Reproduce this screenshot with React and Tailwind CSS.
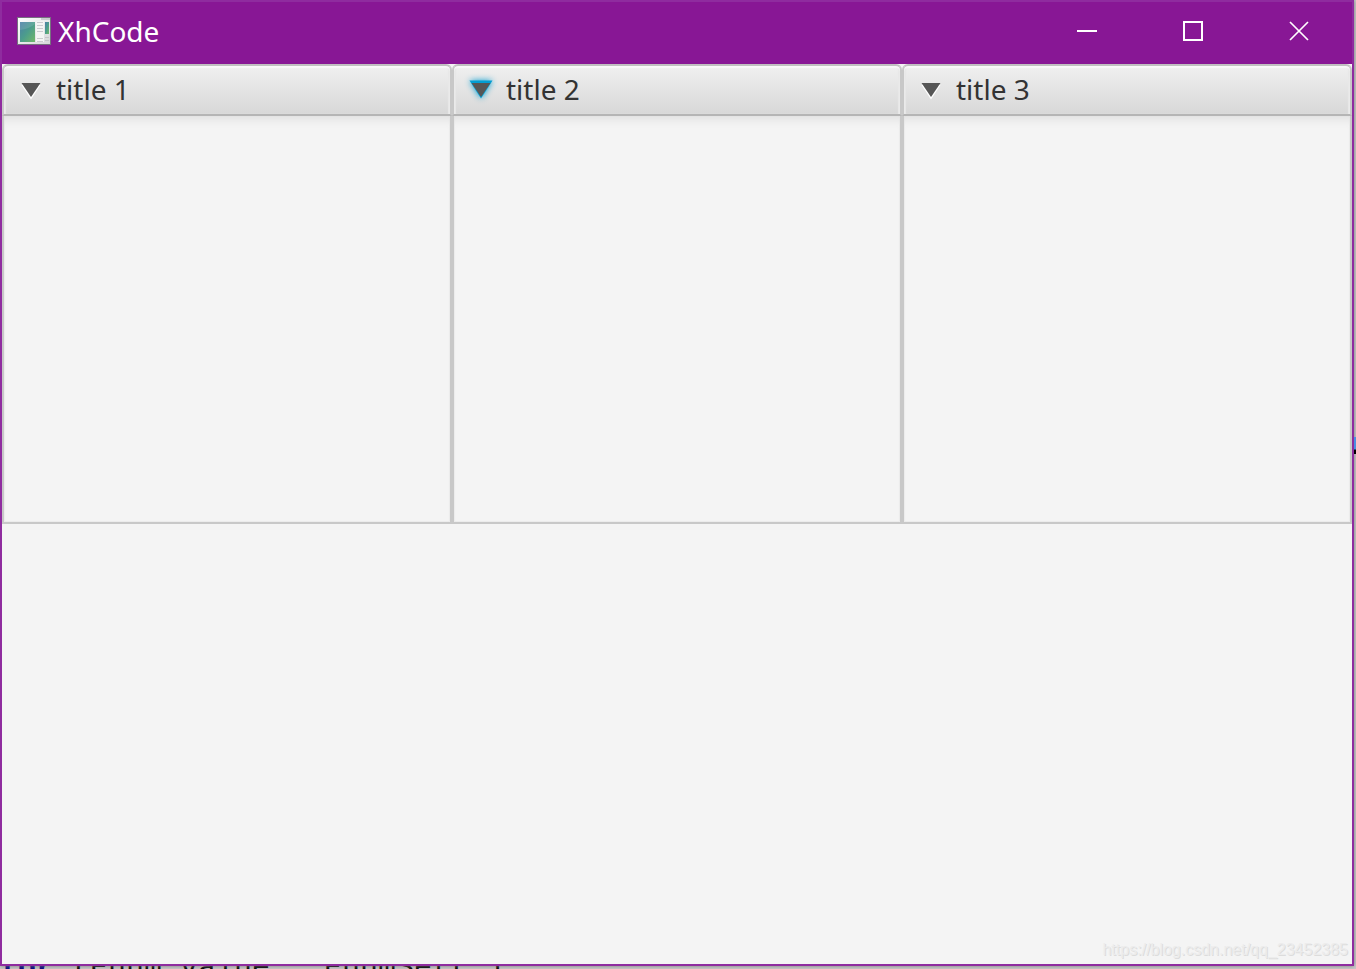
import React, { useState } from "react";

const TitledPane = ({ title, focused }) => {
  const [open, setOpen] = useState(true);

  return (
    <section className="min-w-0 flex flex-col">
      {/* HEADER */}
      <button
        type="button"
        aria-expanded={open}
        onClick={() => setOpen(!open)}
        className="h-[52px] w-full flex items-center gap-3 pl-3.5 pb-0.5 text-left outline-none rounded-t-md border-2 border-b-[#b5b5b5] border-x-[#c8c8c8] border-t-[#c0c0c0] bg-linear-to-b from-[#f0f0f0] to-[#d8d8d8] shadow-[inset_0_2px_1px_#f8f8f8,inset_2px_0_1px_#e8e8e8,inset_-2px_0_1px_#e8e8e8]"
      >
        <svg width="26" height="26" viewBox="0 0 26 26" className="overflow-visible shrink-0">
          {focused ? (
            <path
              d="M1.5 4.5H24.5L13 22.5Z"
              fill="#039ed3"
              className="drop-shadow-[0_0_3px_#039ed3]"
            />
          ) : (
            <path d="M3.5 9H22.5L13 23.5Z" fill="#ffffff" />
          )}
          <path d="M3.5 7H22.5L13 21Z" fill="#565656" />
        </svg>
        <span className="text-[28px] leading-9 text-[#333333]">{title}</span>
      </button>

      {/* CONTENT */}
      {open && (
        <div className="h-[408px] border-2 border-t-0 border-[#c8c8c8] bg-[#f4f4f4] shadow-[inset_0_10px_8px_-6px_#e2e2e2,inset_0_0_0_1px_#ececec]" />
      )}
    </section>
  );
};

const AppIcon = () => (
  <svg width="36" height="30" viewBox="0 0 36 30" className="shrink-0">
    <defs>
      <linearGradient id="screen" x1="0" y1="0" x2="1" y2="1">
        <stop offset="0" stopColor="#4c7fa8" />
        <stop offset="0.5" stopColor="#4c9d8c" />
        <stop offset="1" stopColor="#72b868" />
      </linearGradient>
      <linearGradient id="paper" x1="0" y1="0" x2="1" y2="1">
        <stop offset="0" stopColor="#ffffff" />
        <stop offset="1" stopColor="#d5d5d8" />
      </linearGradient>
    </defs>
    <rect x="1.5" y="1.5" width="33" height="27" fill="url(#paper)" stroke="#777080" />
    <path d="M25 3H34" stroke="#a8a8b2" />
    <rect x="4" y="6" width="15" height="20" fill="url(#screen)" />
    <path d="M4 14Q13 13 19 8V6H4Z" fill="#ffffff" opacity="0.12" />
    <rect x="20" y="5" width="8" height="21" fill="#f4f4f4" />
    <path
      d="M21 6.5H27M21 9.500H27M21 12.500H27M21 15.500H27M21 22.500H27M21 25.500H27"
      stroke="#cacace"
    />
    <rect x="29" y="6" width="4" height="12" fill="url(#screen)" />
    <path d="M29 21.500H33M29 24.500H33" stroke="#c4c4c8" />
  </svg>
);

const controls = [
  { label: "Minimize", path: "M2 12H22" },
  { label: "Maximize", path: "M3 3H21V21H3Z" },
  { label: "Close", path: "M3 3L21 21M21 3L3 21" },
];

const App = () => {
  return (
    <div className="h-screen flex flex-col overflow-hidden bg-[#c9c9c9] font-['Noto_Sans','Open_Sans',sans-serif]">
      <div className="flex-1 min-h-0 flex pr-[2px] relative">
        {/* WINDOW */}
        <div className="flex-1 min-w-0 flex flex-col border-2 border-[#8f2c9f] bg-[#f4f4f4] shadow-[0_0_4px_#777777]">
          {/* TITLE BAR */}
          <header className="h-[62px] shrink-0 flex items-center pb-1 bg-[#881795] text-white">
            <div className="flex-1 flex items-center gap-1.5 pl-3.5">
              <AppIcon />
              <h1 className="text-[28px] leading-9">XhCode</h1>
            </div>

            {controls.map((c) => (
              <button
                key={c.label}
                type="button"
                aria-label={c.label}
                className="w-[106px] h-full flex items-center justify-center"
              >
                <svg
                  width="24"
                  height="24"
                  viewBox="0 0 24 24"
                  fill="none"
                  stroke="currentColor"
                  strokeWidth={c.label === "Close" ? 1.7 : 2}
                >
                  <path d={c.path} />
                </svg>
              </button>
            ))}
          </header>

          {/* PANES */}
          <main className="flex-1 min-h-0 flex flex-col">
            <div className="grid grid-cols-3 items-start">
              <TitledPane title="title 1" />
              <TitledPane title="title 2" focused />
              <TitledPane title="title 3" />
            </div>
            <p className="mt-auto pr-1 pb-1 text-right text-[16px] leading-5 text-[#ececec] [text-shadow:1px_1px_0_#dcdcdc] font-['Liberation_Sans',sans-serif]">
              https://blog.csdn.net/qq_23452385
            </p>
          </main>
        </div>

        {/* editor text peeking out on the right */}
        <span className="absolute right-0 top-[437px] w-[2px] h-[17px] bg-linear-to-b from-[#4a90e2] from-70% to-black to-80%" />
      </div>

      {/* editor line behind the window */}
      <div className="h-[3px] shrink-0 flex items-center overflow-hidden whitespace-pre text-[30px] leading-9 text-black font-['Liberation_Mono',monospace]">
        <span>
          <b className="text-[#000080]">for</b> (Enum value : EnumSet( )
        </span>
      </div>
    </div>
  );
};

export default App;
